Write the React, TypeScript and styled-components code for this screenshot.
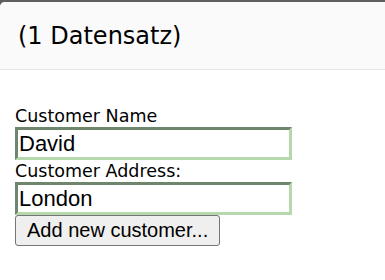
import React from "react";
import styled, { createGlobalStyle } from "styled-components";

const Global = createGlobalStyle`
  html, body { margin: 0; padding: 0; background: #ffffff; }
  body { font-family: "DejaVu Sans", Verdana, sans-serif; }
`;

const Frame = styled.div`
  background: #5f5f5f;
  padding-top: 2px;
  width: 385px;
  height: 280px;
  box-sizing: border-box;
`;

const Panel = styled.div`
  background: #ffffff;
  border-top-left-radius: 5px;
  height: 278px;
  overflow: hidden;
`;

const Header = styled.div`
  height: 67px;
  background: #fafafa;
  border-bottom: 1px solid #e6e6e6;
  display: flex;
  align-items: center;
  padding-left: 18px;
  font-size: 24px;
  color: #000;
`;

const Form = styled.form`
  display: flex;
  flex-direction: column;
  align-items: flex-start;
  padding: 35px 0 0 15px;
`;

const Label = styled.label`
  font-size: 17.5px;
  line-height: 22px;
  height: 22px;
  color: #000;
`;

const Input = styled.input`
  box-sizing: border-box;
  width: 277px;
  height: 33px;
  border-style: solid;
  border-width: 3px;
  border-color: #6e866c #b5d9ad #b5d9ad #6e866c;
  padding: 0 1px;
  font-family: "Liberation Sans", Arial, sans-serif;
  font-size: 22px;
  color: #000;
  background: #fff;
  outline: none;
`;

const Button = styled.button`
  box-sizing: border-box;
  height: 31px;
  padding: 0 11px;
  border: 1px solid #767676;
  border-radius: 3px;
  background: #efefef;
  font-family: "Liberation Sans", Arial, sans-serif;
  font-size: 20px;
  color: #000;
`;

export default function App() {
  return (
    <>
      <Global />
      <Frame>
        <Panel>
          <Header>(1 Datensatz)</Header>
          <Form onSubmit={(e) => e.preventDefault()}>
            <Label>Customer Name</Label>
            <Input defaultValue="David" />
            <Label>Customer Address:</Label>
            <Input defaultValue="London" />
            <Button type="button">Add new customer...</Button>
          </Form>
        </Panel>
      </Frame>
    </>
  );
}
